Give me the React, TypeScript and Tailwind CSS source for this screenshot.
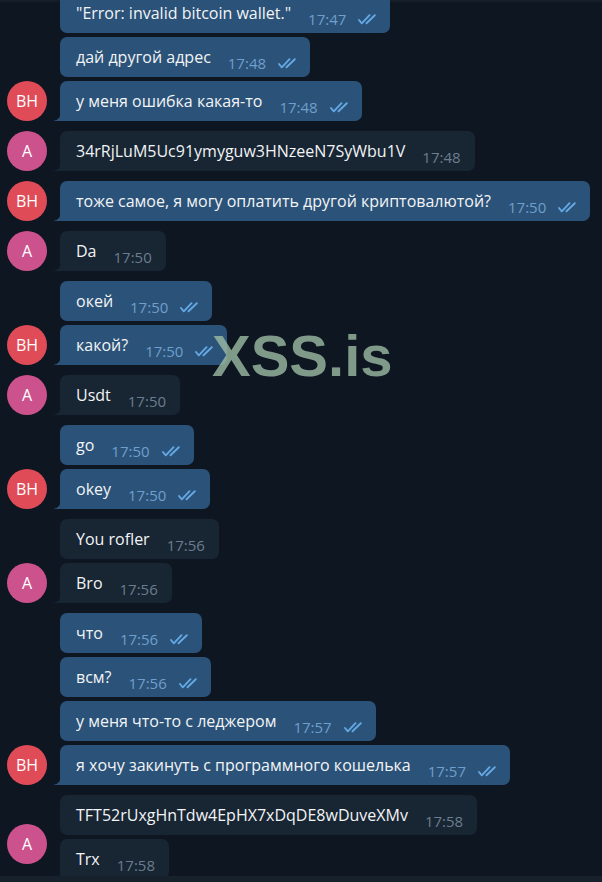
import React from "react"

type Msg = { text: string; time: string }

interface Group {
    who: "BH" | "A"
    msgs: Msg[]
    avatarLift?: boolean
}

const groups: Group[] = [
    {
        who: "BH",
        msgs: [
            { text: "\"Error: invalid bitcoin wallet.\"", time: "17:47" },
            { text: "дай другой адрес", time: "17:48" },
            { text: "у меня ошибка какая-то", time: "17:48" },
        ],
    },
    { who: "A", msgs: [{ text: "34rRjLuM5Uc91ymyguw3HNzeeN7SyWbu1V", time: "17:48" }] },
    { who: "BH", msgs: [{ text: "тоже самое, я могу оплатить другой криптовалютой?", time: "17:50" }] },
    { who: "A", msgs: [{ text: "Da", time: "17:50" }] },
    {
        who: "BH",
        msgs: [
            { text: "окей", time: "17:50" },
            { text: "какой?", time: "17:50" },
        ],
    },
    { who: "A", msgs: [{ text: "Usdt", time: "17:50" }] },
    {
        who: "BH",
        msgs: [
            { text: "go", time: "17:50" },
            { text: "okey", time: "17:50" },
        ],
    },
    {
        who: "A",
        msgs: [
            { text: "You rofler", time: "17:56" },
            { text: "Bro", time: "17:56" },
        ],
    },
    {
        who: "BH",
        msgs: [
            { text: "что", time: "17:56" },
            { text: "всм?", time: "17:56" },
            { text: "у меня что-то с леджером", time: "17:57" },
            { text: "я хочу закинуть с программного кошелька", time: "17:57" },
        ],
    },
    {
        who: "A",
        avatarLift: true,
        msgs: [
            { text: "TFT52rUxgHnTdw4EpHX7xDqDE8wDuveXMv", time: "17:58" },
            { text: "Trx", time: "17:58" },
        ],
    },
]

function DoubleCheck() {
    return (
        <svg width="21" height="11" viewBox="0 0 21 11" fill="none" stroke="#64a8e3" strokeWidth="1.9" strokeLinecap="round" strokeLinejoin="round">
            <path d="M2 6 L4.8 9.3 L12.5 1.2" />
            <path d="M9.5 9.3 L17.8 1.2" />
        </svg>
    )
}

function Bubble({ msg, out, last }: { msg: Msg; out: boolean; last: boolean }) {
    const bg = out ? "#2b5278" : "#182533"
    return (
        <div
            className={`relative flex h-[40px] items-start rounded-[7px] pl-4 ${out ? "bg-[#2b5278] pr-[12px]" : "bg-[#182533] pr-[14px]"} ${last ? "rounded-bl-none" : ""}`}
        >
            {last && (
                <svg className="absolute bottom-0 -left-[7px]" width="8" height="10" viewBox="0 0 8 10">
                    <path d="M8 0 Q8 9 0 10 L8 10 Z" fill={bg} />
                </svg>
            )}
            <span className="mt-[9px] whitespace-nowrap text-[16px] leading-[22px] text-[#f2f4f6]">{msg.text}</span>
            <span className={`ml-[17px] mt-[16px] text-[15px] leading-[20px] ${out ? "text-[#6f9fcc]" : "text-[#6b7d8e]"}`}>
                {msg.time}
            </span>
            {out && (
                <span className="ml-[11px] mt-[21px]">
                    <DoubleCheck />
                </span>
            )}
        </div>
    )
}

function Avatar({ who }: { who: "BH" | "A" }) {
    return (
        <div
            className={`flex h-[40px] w-[40px] items-center justify-center rounded-full text-[16px] text-white ${who === "BH" ? "bg-[#e04b58]" : "bg-[#cc528d]"}`}
        >
            {who === "BH" ? "BH" : "A"}
        </div>
    )
}

export default function App() {
    return (
        <div className="relative h-[882px] w-[602px] overflow-hidden bg-[#0e1621]" style={{ fontFamily: "'Open Sans', 'Noto Sans', sans-serif" }}>
            <div className="absolute left-0 top-0 h-[2px] w-full bg-[#141e29]" />

            {/* chat */}
            <div className="-mt-[7px] flex flex-col gap-[10px]">
                {groups.map((g, gi) => (
                    <div key={gi} className="flex items-end">
                        <div className={`w-[60px] shrink-0 pl-[7px] ${g.avatarLift ? "mb-[15px]" : ""}`}>
                            <Avatar who={g.who} />
                        </div>
                        <div className="flex flex-col items-start gap-1">
                            {g.msgs.map((m, mi) => (
                                <Bubble key={mi} msg={m} out={g.who === "BH"} last={mi === g.msgs.length - 1} />
                            ))}
                        </div>
                    </div>
                ))}
            </div>

            {/* watermark */}
            <div
                className="pointer-events-none absolute left-[212px] top-[327px] text-[58px] font-bold leading-[58px] text-[#9cbba2]/80"
                style={{ fontFamily: "'Liberation Sans', Arial, sans-serif" }}
            >
                XSS.is
            </div>

            {/* bottom input edge */}
            <div className="absolute bottom-0 left-0 h-[6px] w-full bg-[#17212b]" />
        </div>
    )
}
